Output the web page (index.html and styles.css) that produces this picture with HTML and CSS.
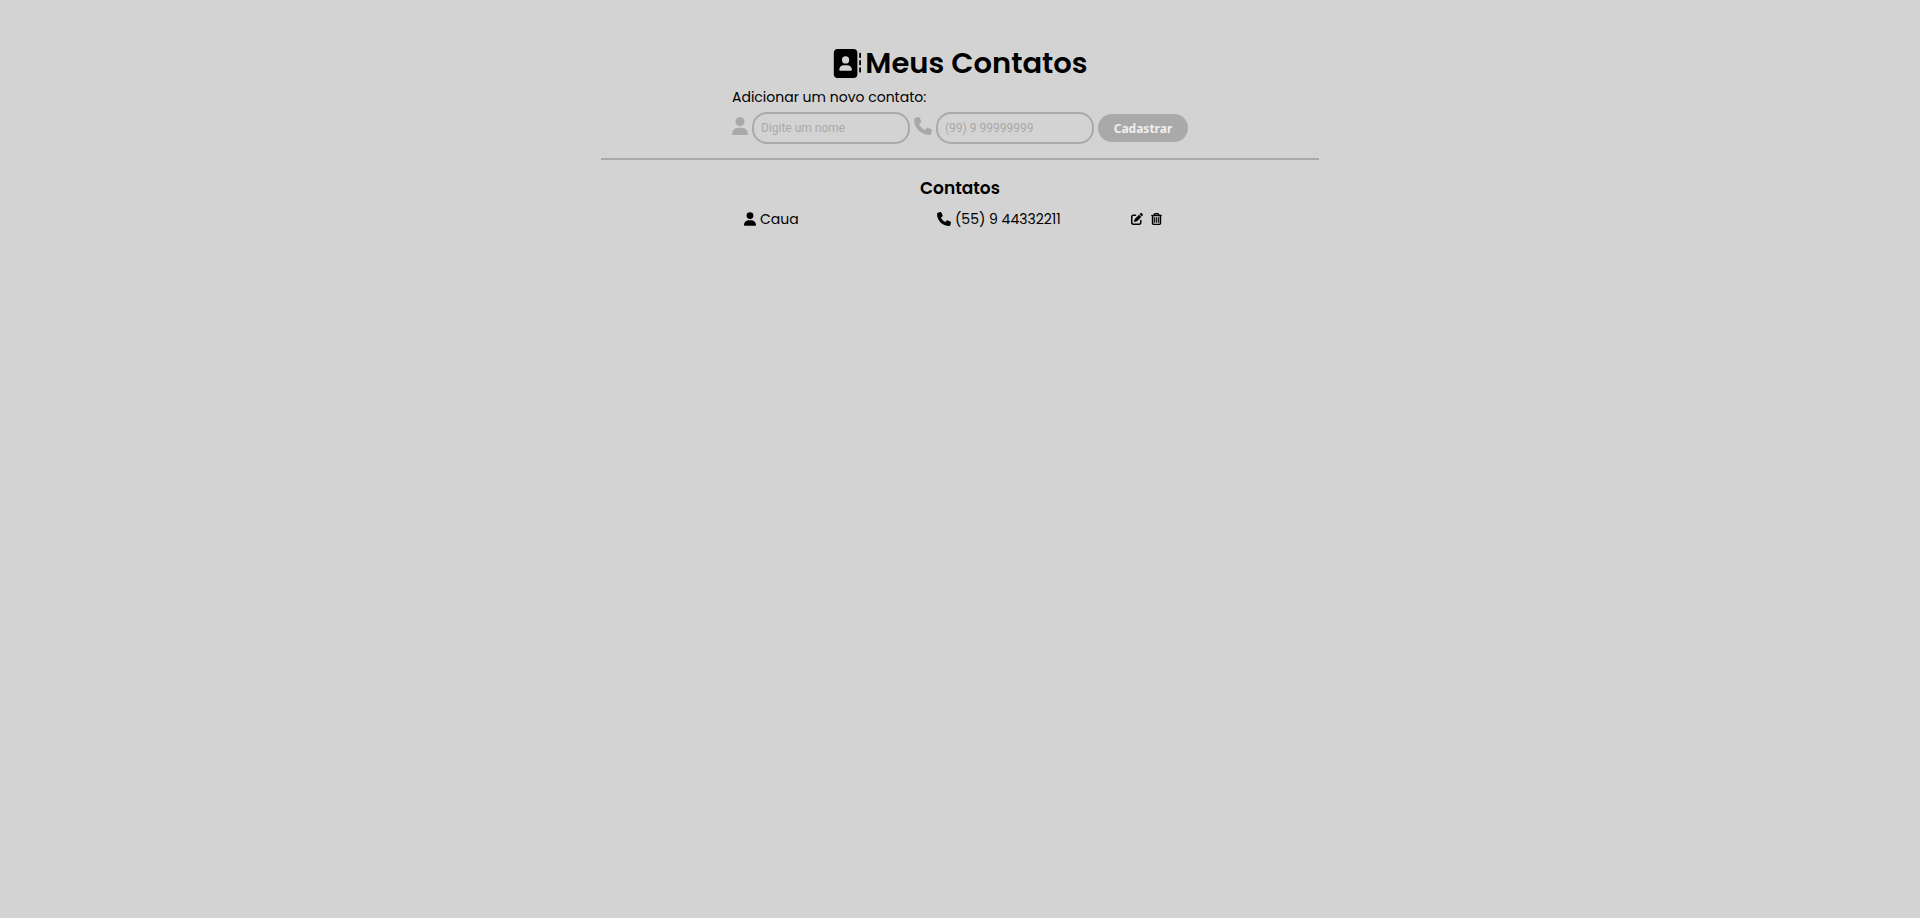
FILE: index.html
```html
<!DOCTYPE html>
<html lang="pt-BR">
<head>
<meta charset="utf-8">
<meta name="viewport" content="width=device-width, initial-scale=1">
<title>Meus Contatos</title>
<link rel="stylesheet" href="styles.css">
</head>
<body>
<svg class="sprite" aria-hidden="true">
  <symbol id="user" viewBox="0 0 448 512"><path d="M224 256A128 128 0 1 0 224 0a128 128 0 1 0 0 256zm-45.700 48C79.800 304 0 383.800 0 482.300C0 498.700 13.300 512 29.700 512H418.300c16.400 0 29.700-13.300 29.700-29.700C448 383.800 368.200 304 269.700 304H178.300z"/></symbol>
  <symbol id="phone" viewBox="0 0 512 512"><path d="M164.900 24.600c-7.700-18.600-28-28.500-47.400-23.200l-88 24C12.100 30.200 0 46 0 64C0 311.400 200.600 512 448 512c18 0 33.800-12.100 38.600-29.500l24-88c5.300-19.400-4.600-39.700-23.200-47.400l-96-40c-16.300-6.800-35.200-2.100-46.300 11.600L304.700 368C234.300 334.700 177.300 277.700 144 207.300L193.300 167c13.700-11.200 18.400-30 11.600-46.300l-40-96z"/></symbol>
</svg>
<main class="page">
  <header class="top">
    <h1 class="title">
      <svg class="icon-book" viewBox="0 0 512 512" aria-hidden="true"><path d="M96 0C60.700 0 32 28.700 32 64V448c0 35.300 28.700 64 64 64H384c35.300 0 64-28.700 64-64V64c0-35.300-28.700-64-64-64H96zM208 288h64c44.200 0 80 35.800 80 80c0 8.800-7.200 16-16 16H144c-8.800 0-16-7.200-16-16c0-44.200 35.800-80 80-80zm-32-96a64 64 0 1 1 128 0 64 64 0 1 1 -128 0zM512 80c0-8.800-7.200-16-16-16s-16 7.200-16 16v64c0 8.800 7.200 16 16 16s16-7.200 16-16V80zM496 192c-8.800 0-16 7.200-16 16v64c0 8.800 7.200 16 16 16s16-7.200 16-16V208c0-8.800-7.200-16-16-16zm16 144c0-8.800-7.200-16-16-16s-16 7.200-16 16v64c0 8.800 7.200 16 16 16s16-7.200 16-16V336z"/></svg>
      <span>Meus Contatos</span>
    </h1>
    <form class="form">
      <p class="form-title">Adicionar um novo contato:</p>
      <div class="fields">
        <label class="field-label" for="nome" aria-label="Nome"><svg class="icon-user"><use href="#user"/></svg></label>
        <input class="field" id="nome" type="text" placeholder="Digite um nome">
        <label class="field-label" for="telefone" aria-label="Telefone"><svg class="icon-phone"><use href="#phone"/></svg></label>
        <input class="field" id="telefone" type="tel" placeholder="(99) 9 99999999">
        <button class="submit" type="submit">Cadastrar</button>
      </div>
    </form>
  </header>
  <section class="contacts">
    <h2 class="subtitle">Contatos</h2>
    <ul class="list">
      <li class="contact">
        <span class="cell"><svg class="small-user" aria-hidden="true"><use href="#user"/></svg>Caua</span>
        <span class="cell"><svg class="small-phone" aria-hidden="true"><use href="#phone"/></svg>(55) 9 44332211</span>
        <span class="actions">
          <button class="action" type="button" aria-label="Editar"><svg class="icon-edit" viewBox="0 0 512 512"><path d="M471.600 21.700c-21.900-21.900-57.300-21.900-79.200 0L362.300 51.700l97.900 97.900 30.100-30.100c21.900-21.900 21.900-57.300 0-79.200L471.600 21.700zm-299.200 220c-6.100 6.100-10.800 13.600-13.500 21.900l-29.600 88.800c-2.900 8.600-.6 18.100 5.800 24.600s15.900 8.700 24.600 5.800l88.800-29.600c8.200-2.700 15.700-7.400 21.900-13.500L437.700 172.300 339.700 74.300 172.400 241.700zM96 64C43 64 0 107 0 160V416c0 53 43 96 96 96H352c53 0 96-43 96-96V320c0-17.700-14.300-32-32-32s-32 14.300-32 32v96c0 17.700-14.300 32-32 32H96c-17.700 0-32-14.300-32-32V160c0-17.700 14.300-32 32-32h96c17.700 0 32-14.300 32-32s-14.300-32-32-32H96z"/></svg></button>
          <button class="action" type="button" aria-label="Excluir"><svg class="icon-trash" viewBox="0 0 448 512"><path d="M170.500 51.600L151.500 80h145l-19-28.400c-1.500-2.200-4-3.600-6.700-3.600H177.100c-2.700 0-5.200 1.300-6.700 3.600zm147-26.600L354.200 80H424c13.300 0 24 10.700 24 24s-10.700 24-24 24h-8V432c0 44.200-35.800 80-80 80H112c-44.200 0-80-35.800-80-80V128H24c-13.300 0-24-10.700-24-24S10.700 80 24 80h69.800l36.700-55.100C140.900 9.400 158.400 0 177.100 0h93.700c18.700 0 36.200 9.400 46.600 24.900zM80 128V432c0 17.700 14.300 32 32 32H336c17.700 0 32-14.300 32-32V128H80zm80 64V400c0 8.800-7.200 16-16 16s-16-7.200-16-16V192c0-8.800 7.200-16 16-16s16 7.200 16 16zm80 0V400c0 8.800-7.200 16-16 16s-16-7.200-16-16V192c0-8.800 7.200-16 16-16s16 7.200 16 16zm80 0V400c0 8.800-7.200 16-16 16s-16-7.200-16-16V192c0-8.800 7.200-16 16-16s16 7.200 16 16z"/></svg></button>
        </span>
      </li>
    </ul>
  </section>
</main>
</body>
</html>
```

FILE: styles.css
```css
* {
  box-sizing: border-box;
  margin: 0;
  padding: 0;
}

body {
  background: #d3d3d3;
  color: #000;
  font-family: Poppins, Inter, sans-serif;
  font-size: 14px;
}

svg {
  display: block;
  flex: none;
  fill: currentColor;
}

.sprite {
  display: none;
}

.page {
  width: 37.4%;
  min-width: 480px;
  margin: 0 auto;
  padding-top: 40px;
}

.top {
  display: flex;
  flex-direction: column;
  align-items: center;
  padding-bottom: 14px;
  border-bottom: 2px solid #a9a9a9;
}

.title {
  display: flex;
  align-items: center;
  gap: 4px;
  font-size: 29px;
  font-weight: 600;
  line-height: 46px;
}

.icon-book {
  width: 29px;
  height: 29px;
}

.form-title {
  line-height: 22px;
}

.fields {
  display: flex;
  align-items: center;
  gap: 4px;
  margin-top: 4px;
}

.field-label {
  padding-bottom: 4px;
  color: #a9a9a9;
}

.icon-user {
  width: 16px;
  height: 18px;
}

.icon-phone {
  width: 18px;
  height: 18px;
}

.field {
  width: 158px;
  height: 32px;
  padding: 0 7px;
  border: 2px solid #a9a9a9;
  border-radius: 15px;
  background: transparent;
  font-family: Roboto, sans-serif;
  font-size: 12px;
}

.field::placeholder {
  color: #a9a9a9;
}

.submit {
  width: 90px;
  height: 28px;
  border: 0;
  border-radius: 15px;
  background: #a9a9a9;
  color: #efefef;
  font-family: "Noto Sans", sans-serif;
  font-size: 12px;
  font-weight: 700;
}

.contacts {
  display: flex;
  flex-direction: column;
  align-items: center;
  padding-top: 15px;
}

.subtitle {
  font-size: 17px;
  font-weight: 600;
  line-height: 26px;
}

.list {
  padding-left: 12px;
  list-style: none;
}

.contact {
  display: grid;
  grid-template-columns: 193px 194px 57px;
  align-items: center;
  height: 36px;
}

.cell,
.actions {
  display: flex;
  align-items: center;
  gap: 4px;
}

.actions {
  gap: 8px;
}

.action {
  border: 0;
  background: transparent;
  color: inherit;
}

.small-user {
  width: 12px;
  height: 14px;
}

.small-phone {
  width: 14px;
  height: 14px;
}

.icon-edit {
  width: 12px;
  height: 12px;
}

.icon-trash {
  width: 11px;
  height: 12px;
  stroke: currentColor;
  stroke-width: 16px;
}
```
